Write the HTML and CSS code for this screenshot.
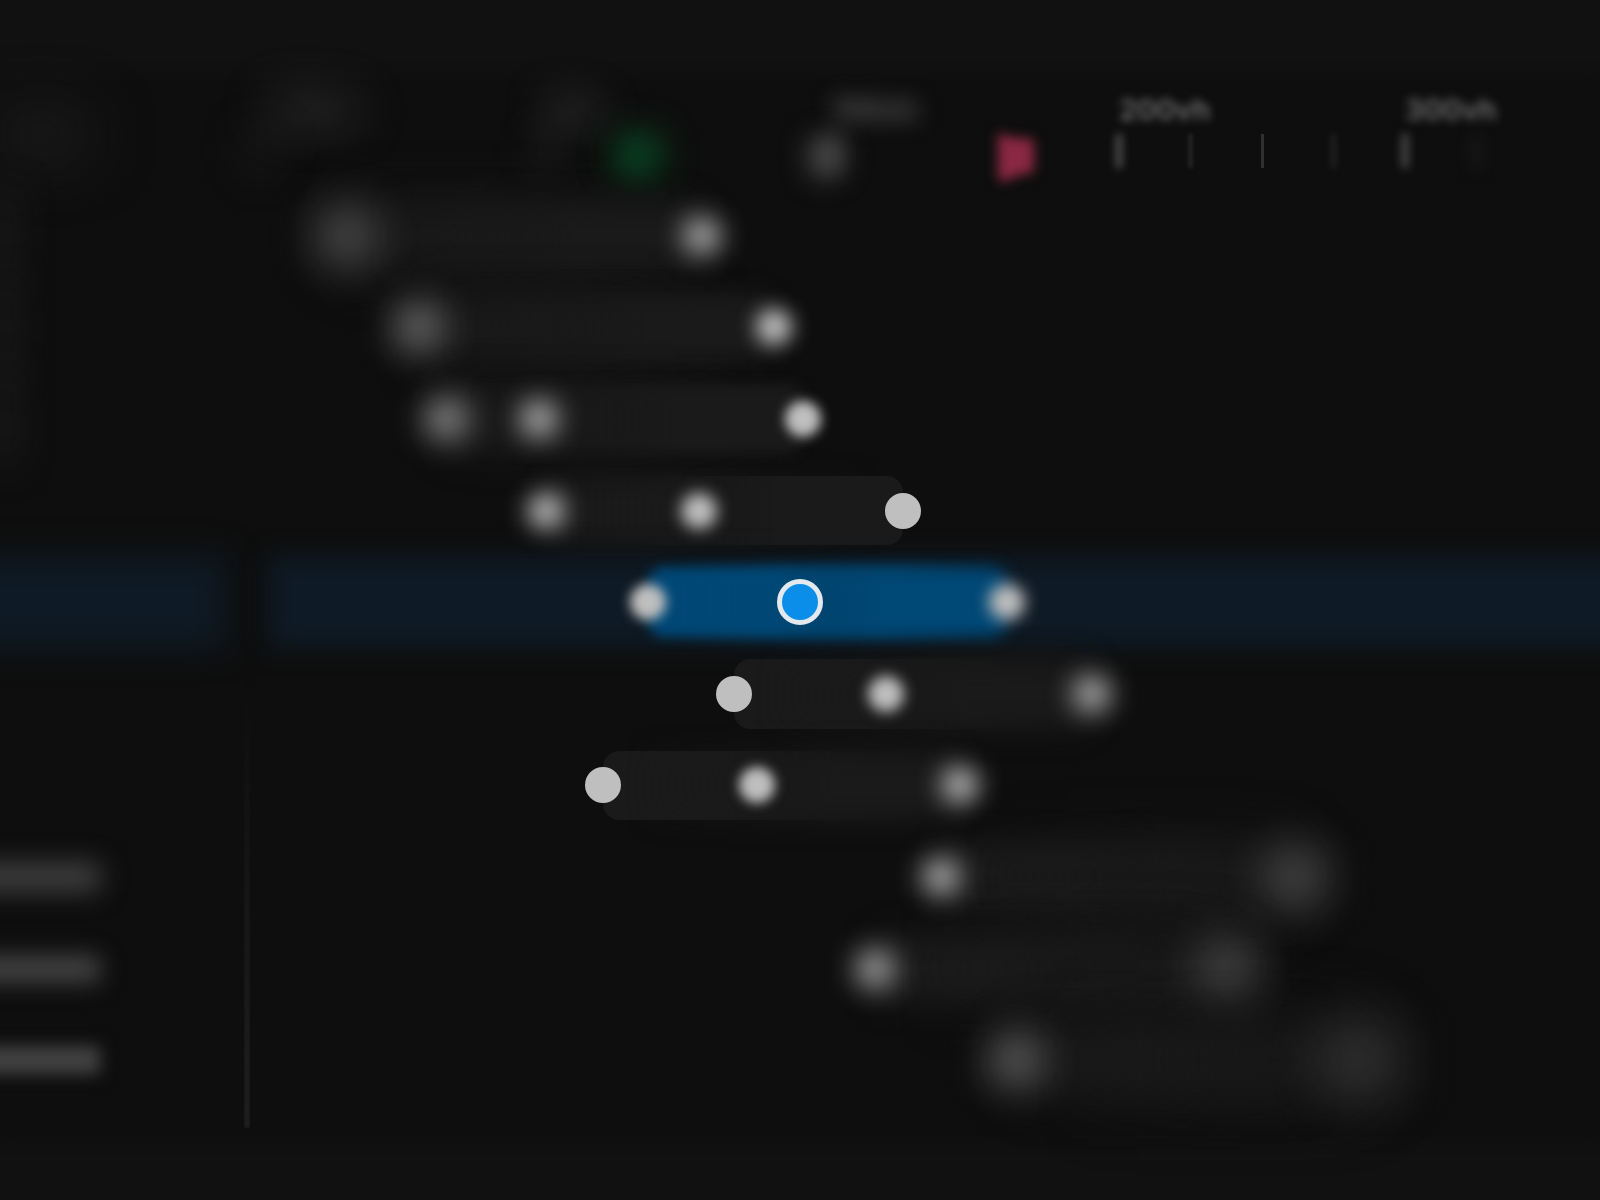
FILE: index.html
```
<!DOCTYPE html>
<html lang="en">
<head>
  <meta charset="UTF-8">
  <title>Timeline</title>
  <link rel="stylesheet" href="styles.css">
</head>
<body>
  <main class="timeline">
    <div class="side side-head"><span class="side-title"></span></div>
    <div class="ruler" id="ruler">
      <svg class="flag" style="left: 56.8%" width="44" height="56" viewBox="0 0 44 56">
        <path d="M4 4 L20 9 H33 Q40 9 40 16 V38 Q40 45 33 45 L24 46 L12 52 Q4 54 4 47 Z"/>
      </svg>
    </div>
  </main>

  <script>
    // positions are in units of the lane, which is 1352 units wide
    const LANE = 1352;
    const pct = n => (n / LANE * 100).toFixed(3) + '%';

    // [position, blur]
    const rows = [
      [[97, 26], [454, 14]],
      [[170, 21], [526, 10]],
      [[198, 17], [291, 14], [555, 6]],
      [[298, 12], [451, 8], [655, 0]],
      [[400, 6], [552, 0], [759, 8]],
      [[486, 0], [638, 7], [844, 14]],
      [[355, 0], [509, 6], [712, 13]],
      [[693, 14], [1049, 27]],
      [[627, 15], [981, 27]],
      [[767, 23], [1115, 34]]
    ];
    const active = 4;

    // [row, blur] of the names that show in the sidebar
    const names = { 7: 13, 8: 11, 9: 8 };

    // [position, blur, label]
    const ticks = [
      [12, 24, '-100vh'], [298, 20, '0vh'], [584, 11, '100vh'],
      [871, 4, '200vh'], [942, 2], [1014, 0], [1085, 3],
      [1157, 5, '300vh'], [1228, 8]
    ];

    const timeline = document.querySelector('.timeline');
    const ruler = document.getElementById('ruler');

    function add(parent, cls, style) {
      const el = document.createElement('div');
      el.className = cls;
      if (style) el.style.cssText = style;
      parent.appendChild(el);
      return el;
    }

    ticks.forEach(([x, blur, label]) => {
      add(ruler, label ? 'tick major' : 'tick', `left: ${pct(x)}; --blur: ${blur}px`);
      if (label) {
        add(ruler, 'tick-label', `left: ${pct(x)}; --blur: ${blur}px`).textContent = label;
      }
    });

    add(ruler, 'marker start', `left: ${pct(390)}`);
    add(ruler, 'marker', `left: ${pct(578)}`);

    rows.forEach((keys, i) => {
      const on = i === active ? ' active' : '';
      const side = add(timeline, 'side' + on);
      if (i < 3) add(side, 'side-edge');
      if (names[i]) add(side, 'side-name', `--blur: ${names[i]}px`);

      const lane = add(timeline, 'lane' + on);
      const first = keys[0];
      const last = keys[keys.length - 1];
      const bar = add(lane, 'bar', `left: ${pct(first[0])}; width: ${pct(last[0] - first[0])}`);
      // two copies faded into each other, so the focus changes along the bar
      add(add(bar, 'fade fade-left'), 'fill', `--blur: ${first[1]}px`);
      add(add(bar, 'fade fade-right'), 'fill', `--blur: ${last[1]}px`);

      keys.forEach(([x, blur], k) => {
        const current = on && k === 1 ? ' current' : '';
        add(lane, 'key' + current, `left: ${pct(x)}; --blur: ${blur}px`);
      });
    });

    add(timeline, 'divider');
  </script>
</body>
</html>
```
FILE: styles.css
```
* {
  box-sizing: border-box;
}

body {
  margin: 0;
  height: 100vh;
  padding: 80px 0 64px;
  background-color: #111;
  color: #6e6e6e;
  font-family: Inter, "Liberation Sans", sans-serif;
  overflow: hidden;
}

.timeline {
  position: relative;
  display: grid;
  grid-template-columns: 248px 1fr;
  grid-template-rows: 110px repeat(10, 1fr);
  height: 100%;
  padding-bottom: 30px;
  background-color: #0e0e0e;
  box-shadow: 0 0 12px #0e0e0e;
}

.side {
  position: relative;
  display: flex;
  align-items: center;
}

.side-title {
  width: 84px;
  height: 32px;
  background-color: #262626;
  filter: blur(32px);
}

.side-edge {
  width: 12px;
  height: 100%;
  background-color: #262626;
  filter: blur(18px);
}

.side-name {
  width: 100px;
  height: 28px;
  margin-left: -40px;
  padding-left: 40px;
  box-sizing: content-box;
  background-color: #424242;
  filter: blur(var(--blur));
}

/* ruler */
.ruler {
  position: relative;
}

.tick {
  position: absolute;
  top: 54px;
  width: 3px;
  height: 34px;
  margin-left: -1px;
  background-color: #303030;
  filter: blur(var(--blur));
}

.tick.major {
  width: 6px;
  margin-left: -3px;
  background-color: #565656;
}

.tick-label {
  position: absolute;
  top: 12px;
  font-size: 29px;
  line-height: 36px;
  font-weight: 600;
  filter: blur(var(--blur));
}

.marker {
  position: absolute;
  top: 56px;
  width: 32px;
  height: 42px;
  margin-left: -16px;
  border-radius: 16px;
  background-color: #525252;
  filter: blur(14px);
}

.marker.start {
  width: 48px;
  height: 48px;
  top: 52px;
  margin-left: -24px;
  border-radius: 24px;
  background-color: #084c24;
  filter: blur(17px);
}

.flag {
  position: absolute;
  top: 49px;
  margin-left: -22px;
  fill: #8a2843;
  filter: blur(6px);
  overflow: visible;
}

/* rows */
.lane {
  position: relative;
}

.side.active::before,
.lane.active::before {
  content: "";
  position: absolute;
  inset: 0 22px 0 -40px;
  background-color: #0e1a25;
  filter: blur(16px);
}

.lane.active::before {
  inset: 0 -40px 0 20px;
  filter: blur(12px);
}

.bar {
  position: absolute;
  top: 11px;
  bottom: 11px;
}

.fade {
  position: absolute;
  inset: -80px;
  padding: 80px;
}

.fade-left {
  mask-image: linear-gradient(to right, #000 40%, transparent 80%);
}

.fade-right {
  mask-image: linear-gradient(to right, transparent 20%, #000 60%);
}

.fill {
  height: 100%;
  border-radius: 16px;
  background-color: #1a1a1a;
  filter: blur(var(--blur));
}

.active .fill {
  background-color: #004876;
}

.key {
  position: absolute;
  top: 50%;
  width: 36px;
  height: 36px;
  margin: -18px 0 0 -18px;
  border-radius: 50%;
  background-color: #bfbfbf;
  filter: blur(var(--blur));
}

.key.current {
  width: 46px;
  height: 46px;
  margin: -23px 0 0 -23px;
  border: 5px solid #e4e9ee;
  background-color: #0a8eea;
}

.divider {
  position: absolute;
  left: 244px;
  top: 600px;
  bottom: 8px;
  width: 6px;
  background-color: #222;
  filter: blur(2px);
  mask-image: linear-gradient(transparent, #000);
}
```
